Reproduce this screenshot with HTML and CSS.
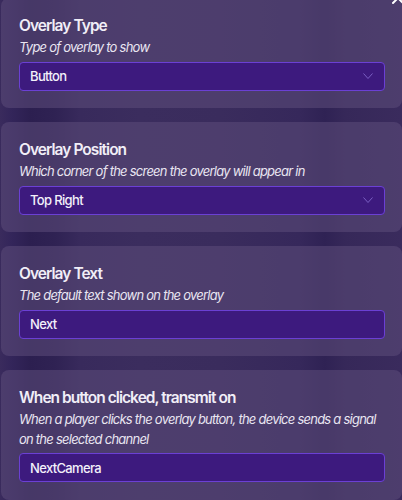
FILE: index.html
```html
<!DOCTYPE html>
<html>
<head>
<meta charset="utf-8">
<link rel="stylesheet" href="styles.css">
</head>
<body>
<div class="page">
  <svg class="close" width="14" height="14" viewBox="0 0 14 14"><path d="M2 2 L12 12 M12 2 L2 12" stroke="#ffffff" stroke-width="2" stroke-linecap="round"/></svg>
  <div class="list">
    <section class="card">
      <h2 class="title">Overlay Type</h2>
      <p class="desc">Type of overlay to show</p>
      <div class="field select"><span>Button</span>
        <svg class="chev" width="10" height="6" viewBox="0 0 10 6"><path d="M0.5 0.5 L5 5.5 L9.5 0.5" fill="none" stroke="#7b5fc4" stroke-width="1"/></svg>
      </div>
    </section>
    <section class="card">
      <h2 class="title">Overlay Position</h2>
      <p class="desc">Which corner of the screen the overlay will appear in</p>
      <div class="field select"><span>Top Right</span>
        <svg class="chev" width="10" height="6" viewBox="0 0 10 6"><path d="M0.5 0.5 L5 5.5 L9.5 0.5" fill="none" stroke="#7b5fc4" stroke-width="1"/></svg>
      </div>
    </section>
    <section class="card">
      <h2 class="title">Overlay Text</h2>
      <p class="desc">The default text shown on the overlay</p>
      <div class="field"><span>Next</span></div>
    </section>
    <section class="card">
      <h2 class="title">When button clicked, transmit on</h2>
      <p class="desc">When a player clicks the overlay button, the device sends a signal on the selected channel</p>
      <div class="field"><span>NextCamera</span></div>
    </section>
  </div>
</div>
</body>
</html>
```
FILE: styles.css
```css
html, body {
  margin: 0;
  padding: 0;
}
body {
  width: 402px;
  height: 500px;
  overflow: hidden;
  font-family: Inter, "Noto Sans", sans-serif;
  color: #f1eef7;
  background:
    linear-gradient(90deg,
      #3a2b5d 0px, #33255a 12px, #2c1f50 30px, #2f2253 55px, #382a5c 80px,
      #3b2d5e 140px, #3a2c5d 220px, #36285b 300px, #2f2254 325px, #362859 345px,
      #3a2b5d 402px);
}
.page {
  position: relative;
  height: 500px;
}
.close {
  position: absolute;
  right: -3px;
  top: -7px;
}
.list {
  display: flex;
  flex-direction: column;
  gap: 14px;
  margin-top: -2px;
  padding-left: 1px;
}
.card {
  background: rgba(92, 76, 122, 0.55);
  border-radius: 8px;
  padding: 18px 17px 17.5px 18px;
  display: flex;
  flex-direction: column;
}
.title {
  margin: 0;
  font-size: 15.5px;
  line-height: 20px;
  font-weight: 600;
  letter-spacing: -0.95px;
  color: #f1eef7;
}
.desc {
  margin: 2px 0 4px 0;
  font-size: 13px;
  line-height: 19.5px;
  font-style: italic;
  letter-spacing: -0.76px;
  color: #e9e5f1;
}
.field {
  height: 27px;
  border: 1px solid #6b40d4;
  background: #3d1a7e;
  border-radius: 4px;
  display: flex;
  align-items: center;
  justify-content: space-between;
  padding: 0 11px 0 10px;
  font-size: 13px;
  font-weight: 500;
  letter-spacing: -0.65px;
  color: #f3f0fa;
}
.chev {
  display: block;
}
```
